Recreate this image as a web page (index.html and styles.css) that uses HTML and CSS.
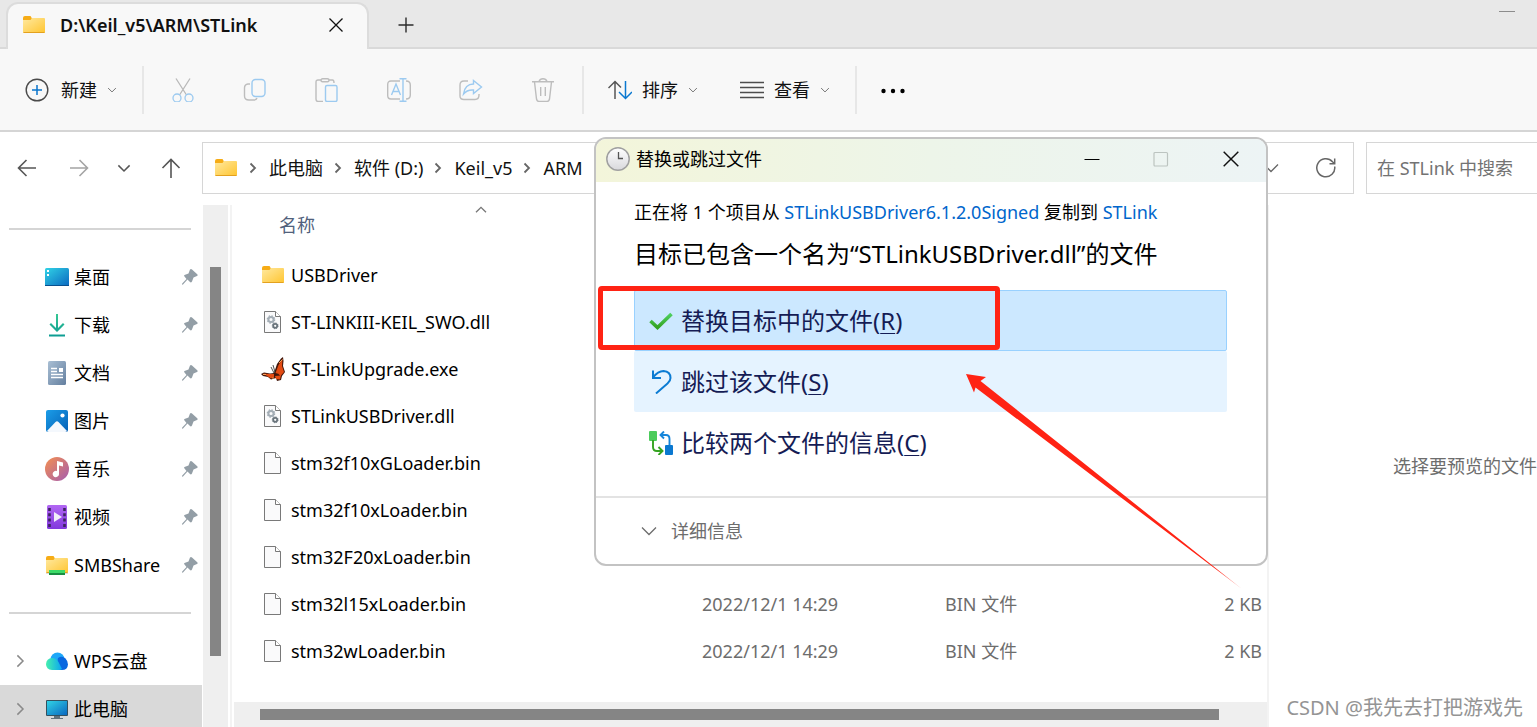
FILE: index.html
```html
<!DOCTYPE html>
<html lang="zh-CN">
<head>
<meta charset="utf-8">
<title>D:\Keil_v5\ARM\STLink</title>
<link rel="stylesheet" href="styles.css">
</head>
<body>
<svg class="sprite" aria-hidden="true">
  <defs>
    <linearGradient id="g-folder" x1="0" y1="0" x2="1" y2="1"><stop offset="0" stop-color="#ffe9a0"/><stop offset="1" stop-color="#ffc530"/></linearGradient>
    <linearGradient id="g-desk" x1="0" y1="0" x2="1" y2="1"><stop offset="0" stop-color="#31d3e6"/><stop offset="1" stop-color="#0a68c0"/></linearGradient>
    <linearGradient id="g-down" x1="0" y1="0" x2="0" y2="1"><stop offset="0" stop-color="#35c793"/><stop offset="1" stop-color="#0c9c93"/></linearGradient>
    <linearGradient id="g-doc" x1="0" y1="0" x2="1" y2="1"><stop offset="0" stop-color="#a9bfd4"/><stop offset="1" stop-color="#647f9f"/></linearGradient>
    <linearGradient id="g-pic" x1="0" y1="0" x2="1" y2="1"><stop offset="0" stop-color="#1b9de8"/><stop offset="1" stop-color="#0560b6"/></linearGradient>
    <linearGradient id="g-music" x1="0" y1="0" x2="1" y2="1"><stop offset="0" stop-color="#f5904f"/><stop offset="1" stop-color="#a45cb0"/></linearGradient>
    <linearGradient id="g-video" x1="0" y1="0" x2="0" y2="1"><stop offset="0" stop-color="#b267f3"/><stop offset="1" stop-color="#8138dd"/></linearGradient>
    <linearGradient id="g-cloud" x1="0" y1="0" x2="1" y2="0"><stop offset="0" stop-color="#45f0ae"/><stop offset="1" stop-color="#0aa5f2"/></linearGradient>
    <linearGradient id="g-clock" x1="0" y1="0" x2="0" y2="1"><stop offset="0" stop-color="#ffffff"/><stop offset="1" stop-color="#d8d8dc"/></linearGradient>
    <linearGradient id="g-check" x1="0" y1="0" x2="0" y2="1"><stop offset="0" stop-color="#4fd060"/><stop offset="1" stop-color="#35a321"/></linearGradient>
    <linearGradient id="g-arrow" gradientUnits="userSpaceOnUse" x1="0" y1="0" x2="276" y2="215"><stop offset="0.9" stop-color="#ff2314"/><stop offset="1" stop-color="#ff2314" stop-opacity="0.5"/></linearGradient>
  </defs>
  <symbol id="folder" viewBox="0 0 24 24"><path d="M1 5V5Q1 3 3 3H8.5L10 5.500V8H1Z" fill="#f6ac16"/><path d="M1 7H8.500L10 5H22Q23 5 23 6V19Q23 20 22 20H2Q1 20 1 19Z" fill="url(#g-folder)"/><path d="M1.500 19.500H22.500" stroke="#e3a11f"/></symbol>
  <symbol id="netfolder" viewBox="0 0 24 24"><use href="#folder"/><path d="M1 20H23V21H1Z" fill="#dcdcdc"/><rect x="4" y="17" width="16" height="5" fill="#3cdb68"/><rect x="4" y="20" width="16" height="2" fill="#188f42"/></symbol>
  <symbol id="desk" viewBox="0 0 24 24"><rect y="3" width="24" height="18" rx="1.500" fill="url(#g-desk)"/><path d="M2 5H4V7H2ZM2 9H4V11H2Z" fill="#fff"/><path d="M0 20.500H24" stroke="#09508e"/></symbol>
  <symbol id="down" viewBox="0 0 24 24"><path d="M11 1H13V15L18 10L19.500 11.500L12 19L4.500 11.500L6 10L11 15ZM4 21.500H20V23.500H4Z" fill="url(#g-down)"/></symbol>
  <symbol id="doc" viewBox="0 0 24 24"><rect x="3" width="18" height="24" rx="1.500" fill="url(#g-doc)"/><path d="M6 7.500H12M6 10.500H12M6 13.500H18M6 16.500H18" stroke="#fff" stroke-width="1.300"/><rect x="14" y="7" width="4" height="4" fill="#fff"/></symbol>
  <symbol id="pic" viewBox="0 0 24 24"><rect x="1" y="1" width="22" height="22" rx="2" fill="url(#g-pic)"/><path d="M2 22L10.500 13Q12 11.500 13.500 13L22 22Q21.500 23 20 23H4Q2.500 23 2 22Z" fill="#f4f8fd"/><circle cx="17.500" cy="6.500" r="2.100" fill="#fff"/></symbol>
  <symbol id="music" viewBox="0 0 24 24"><circle cx="12" cy="12" r="12" fill="url(#g-music)"/><path d="M12 4L18 5.500V9.500L14 8.500V16.500A3.200 3.200 0 1 1 12 14Z" fill="#fff"/></symbol>
  <symbol id="video" viewBox="0 0 24 24"><rect x="2" width="20" height="24" rx="1.500" fill="url(#g-video)"/><path d="M4.500 3V22M19.500 3V22" stroke="#3c2460" stroke-width="2.600" stroke-dasharray="3 2.300"/><path d="M9 7L17 12L9 17Z" fill="#f1eef8"/></symbol>
  <symbol id="cloud" viewBox="0 0 24 24"><circle cx="12.500" cy="10.500" r="7" fill="#1ea7f8"/><path d="M13 9Q17 6.500 20.500 9.500Q23 12 23 15.500Q22.500 21 17 21H11Z" fill="#0867e0"/><path d="M7 9Q11 9 13.500 13L17 20Q16 21 14 21H7Q1 20.500 1 15Q1.500 9.500 7 9Z" fill="url(#g-cloud)"/></symbol>
  <symbol id="pc" viewBox="0 0 24 24"><path d="M9 19H15V21H18V22H6V21H9Z" fill="#60717c"/><rect x="1" y="3" width="22" height="16" rx="1" fill="#34515f"/><rect x="2" y="4" width="20" height="14" fill="url(#g-desk)"/></symbol>
  <symbol id="pin" viewBox="0 0 18 18"><path d="M9 1.500Q10 0.500 11 1.500L16.500 6.500Q17 7.500 16 8L12.500 9.500L11 13.500Q10 15 9 14L6.500 11.500L2 16.500L1 16.800L1.200 15.500L5.500 11L3.500 8.500Q2.500 7.500 3.500 7L7.500 5.500Z" fill="#939ea6"/></symbol>
  <symbol id="page" viewBox="0 0 24 24"><path d="M4 1.500H14.500L19.500 6.500V22.500H3.500V1.500Z" fill="#fafafb" stroke="#797979"/><path d="M14.500 1.500V6.500H19.500" fill="#fff" stroke="#797979"/></symbol>
  <symbol id="dll" viewBox="0 0 24 24"><use href="#page"/><circle cx="10" cy="9.500" r="2.600" fill="none" stroke="#a3adb5" stroke-width="2"/><circle cx="10" cy="9.500" r="3.700" fill="none" stroke="#a3adb5" stroke-width="1.200" stroke-dasharray="1.500 1.400"/><circle cx="14.200" cy="15.800" r="2" fill="none" stroke="#69747c" stroke-width="1.700"/><circle cx="14.200" cy="15.800" r="2.900" fill="none" stroke="#69747c" stroke-dasharray="1.200 1.080"/></symbol>
  <symbol id="moth" viewBox="0 0 24 24"><path d="M0 17L3 15.500L9 16.500L13 16L16 7L20 1.500L22 0L22.500 4L22 9L24 15L21 19L20 23L16 24L15 21L10 22.500L7 20L2 19Z" fill="#43170b"/><path d="M2 16.500L7 17L13 17L13 20L10 21.500L6 19ZM14.500 16L17.500 8L21.500 2L21 9L18 17ZM17.500 17L21 9L23 15L19.500 19ZM14 19L20 18.500L19 22.500L15 22Z" fill="#e34b13"/><path d="M2 17.500H5M18 6L21.500 2.500M11 21H13" stroke="#f2a15c"/><path d="M13 16L10 10M14 15L12 8" stroke="#222" stroke-width="0.800"/></symbol>
  <symbol id="chev" viewBox="0 0 24 24"><path d="M4.500 8.500L12 16L19.500 8.500" fill="none" stroke="currentColor" stroke-width="2"/></symbol>
  <symbol id="chev-bold" viewBox="0 0 16 16"><path d="M3.500 5.500L8 10L12.500 5.500" fill="none" stroke="currentColor" stroke-width="1.800"/></symbol>
  <symbol id="chev-thin" viewBox="0 0 18 18"><path d="M2 5.500L9 12.500L16 5.500" fill="none" stroke="currentColor" stroke-width="1.300"/></symbol>
  <symbol id="close" viewBox="0 0 16 16"><path d="M1.500 1.500L14.500 14.500M14.500 1.500L1.500 14.500" fill="none" stroke="currentColor" stroke-width="1.300"/></symbol>
</svg>

<div class="explorer">
  <header class="tabs">
    <div class="tab">
      <svg class="ico"><use href="#folder"/></svg>
      <span class="tab-title">D:\Keil_v5\ARM\STLink</span>
      <button class="plain" aria-label="关闭标签页"><svg class="ico-16"><use href="#close"/></svg></button>
    </div>
    <button class="plain add" aria-label="新建标签页"><svg class="ico-16" viewBox="0 0 16 16"><path d="M8 0.500V15.500M0.500 8H15.500" stroke="#2b2b2b" stroke-width="1.400"/></svg></button>
    <button class="plain minimise" aria-label="最小化"><svg class="ico-16" viewBox="0 0 16 16"><path d="M0 8.500H16" stroke="#8c8c8c"/></svg></button>
  </header>

  <div class="toolbar">
    <button class="tool new">
      <svg class="ico" viewBox="0 0 24 24" fill="none"><circle cx="12" cy="12" r="10.800" stroke="#4a4a4a" stroke-width="1.400"/><path d="M12 7V17M7 12H17" stroke="#0a74cc" stroke-width="1.500"/></svg>
      新建<svg class="ico-10 dim"><use href="#chev-thin"/></svg>
    </button>
    <div class="tool-group">
      <button class="plain" aria-label="剪切"><svg class="ico" viewBox="0 0 24 24" fill="none" stroke-width="1.300"><path d="M5 0.500L15.500 17M19 0.500L8.500 17" stroke="#b9b9b9"/><circle cx="6" cy="20" r="4" stroke="#9ccaf0"/><circle cx="18" cy="20" r="4" stroke="#9ccaf0"/></svg></button>
      <button class="plain" aria-label="复制"><svg class="ico" viewBox="0 0 24 24" fill="none" stroke-width="1.400"><path d="M7 6H5Q1.500 6.500 1.500 10V18Q1.500 22 6 22H10Q13.500 22 14 20" stroke="#bdbdbd"/><rect x="9" y="1.500" width="13" height="17" rx="3.500" stroke="#9ccaf0"/></svg></button>
      <button class="plain" aria-label="粘贴"><svg class="ico" viewBox="0 0 24 24" fill="none" stroke-width="1.400"><path d="M6 2H3Q1 2 1 4V21Q1 23.500 3 23.500H8M14 2H17.500Q19 2 19 5" stroke="#bdbdbd"/><rect x="6" y="0.700" width="8" height="3" rx="1.500" stroke="#bdbdbd"/><rect x="10.500" y="7.500" width="11.500" height="16" rx="1.500" stroke="#9ccaf0"/></svg></button>
      <button class="plain" aria-label="重命名"><svg class="ico" viewBox="0 0 24 24" fill="none" stroke-width="1.400"><path d="M13 3H4Q0.700 3 0.700 6.500V17.500Q0.700 21 4 21H13M19 3Q23.300 3 23.300 7V17Q23.300 21 19 21" stroke="#bdbdbd"/><path d="M4.500 17L9 6L13.500 17M6 13.500H12M16 1V23M12.500 0.700H19.500M12.500 23.300H19.500" stroke="#9ccaf0"/></svg></button>
      <button class="plain" aria-label="共享"><svg class="ico" viewBox="0 0 24 24" fill="none" stroke-width="1.400"><path d="M9 3H5Q1 3 1 7V18Q1 21.500 5 21.500H16Q20 21.500 20 17V16" stroke="#bdbdbd"/><path d="M14.500 2.500L22.500 9L14.500 15.500V12Q8 11.500 4.500 16Q6 6 14.500 6Z" stroke="#9ccaf0"/></svg></button>
      <button class="plain" aria-label="删除"><svg class="ico" viewBox="0 0 24 24" fill="none" stroke="#bdbdbd" stroke-width="1.400"><path d="M1 3.700H23M8 3.500Q9 0.700 12 0.700T16 3.500M3.500 4L5.500 21Q6 23.500 8 23.500H16Q18 23.500 18.500 21L20.500 4M9.700 9V18M14.300 9V18"/></svg></button>
    </div>
    <div class="tool-group wide">
      <button class="tool"><svg class="ico" viewBox="0 0 24 24" fill="none" stroke-width="1.500"><path d="M7 21V3M0.500 10L7 3.500L13 9.500" stroke="#555"/><path d="M17.500 3V20M11 14L17.500 20.500L24 14" stroke="#0a78d0"/></svg>排序<svg class="ico-10 dim"><use href="#chev-thin"/></svg></button>
      <button class="tool"><svg class="ico" viewBox="0 0 24 24"><path d="M0 4.500H24M0 9.500H24M0 14.500H24M0 19.500H24" stroke="#4d4d4d" stroke-width="1.300"/></svg>查看<svg class="ico-10 dim"><use href="#chev-thin"/></svg></button>
    </div>
    <button class="plain more" aria-label="更多"><svg class="ico" viewBox="0 0 24 24"><circle cx="2.500" cy="13" r="2.200"/><circle cx="12" cy="13" r="2.200"/><circle cx="21.500" cy="13" r="2.200"/></svg></button>
  </div>

  <div class="navbar">
    <div class="nav-buttons">
      <button class="plain" aria-label="后退"><svg class="ico-20" viewBox="0 0 20 20" fill="none" stroke="#555" stroke-width="1.600"><path d="M19 10H2M9.500 2L1.500 10L9.500 18"/></svg></button>
      <button class="plain" aria-label="前进"><svg class="ico-20" viewBox="0 0 20 20" fill="none" stroke="#a4a4a4" stroke-width="1.600"><path d="M1 10H18M10.500 2L18.500 10L10.500 18"/></svg></button>
      <button class="plain" aria-label="最近位置"><svg class="ico-18"><use href="#chev"/></svg></button>
      <button class="plain" aria-label="上移"><svg class="ico-20" viewBox="0 0 20 20" fill="none" stroke="#555" stroke-width="1.600"><path d="M10 20V2M1.500 10L10 1.500L18.500 10"/></svg></button>
    </div>
    <nav class="address" aria-label="地址">
      <svg class="ico"><use href="#folder"/></svg>
      <svg class="ico-16 right"><use href="#chev-bold"/></svg><span>此电脑</span>
      <svg class="ico-16 right"><use href="#chev-bold"/></svg><span>软件 (D:)</span>
      <svg class="ico-16 right"><use href="#chev-bold"/></svg><span>Keil_v5</span>
      <svg class="ico-16 right"><use href="#chev-bold"/></svg><span>ARM</span>
      <span class="grow"></span>
      <button class="plain" aria-label="展开"><svg class="ico-18"><use href="#chev-thin"/></svg></button>
      <button class="plain refresh" aria-label="刷新"><svg class="ico-20" viewBox="0 0 20 20" fill="none" stroke="#666" stroke-width="1.500"><path d="M18.700 8.500A9 9 0 1 1 16.500 3.800L18.500 5.500M18.700 0.500V5.700H13.500"/></svg></button>
    </nav>
    <input class="search" type="text" aria-label="搜索" placeholder="在 STLink 中搜索">
  </div>

  <main class="panes">
    <aside class="side">
      <hr class="rule">
      <ul class="places">
        <li><svg class="ico"><use href="#desk"/></svg><span>桌面</span><svg class="ico-18"><use href="#pin"/></svg></li>
        <li><svg class="ico"><use href="#down"/></svg><span>下载</span><svg class="ico-18"><use href="#pin"/></svg></li>
        <li><svg class="ico"><use href="#doc"/></svg><span>文档</span><svg class="ico-18"><use href="#pin"/></svg></li>
        <li><svg class="ico"><use href="#pic"/></svg><span>图片</span><svg class="ico-18"><use href="#pin"/></svg></li>
        <li><svg class="ico"><use href="#music"/></svg><span>音乐</span><svg class="ico-18"><use href="#pin"/></svg></li>
        <li><svg class="ico"><use href="#video"/></svg><span>视频</span><svg class="ico-18"><use href="#pin"/></svg></li>
        <li><svg class="ico"><use href="#netfolder"/></svg><span>SMBShare</span><svg class="ico-18"><use href="#pin"/></svg></li>
      </ul>
      <hr class="rule">
      <ul class="places tree">
        <li><svg class="ico-18 right"><use href="#chev"/></svg><svg class="ico"><use href="#cloud"/></svg><span>WPS云盘</span></li>
        <li class="current"><svg class="ico-18 right"><use href="#chev"/></svg><svg class="ico"><use href="#pc"/></svg><span>此电脑</span></li>
      </ul>
    </aside>
    <div class="vbar"><div class="vthumb"></div></div>
    <section class="files">
      <table>
        <colgroup><col class="c-name"><col class="c-date"><col class="c-type"><col></colgroup>
        <thead><tr><th colspan="4"><div class="head"><span>名称</span><svg class="ico-16 up"><use href="#chev"/></svg></div></th></tr></thead>
        <tbody>
          <tr><td><div class="file"><svg class="ico"><use href="#folder"/></svg>USBDriver</div></td><td></td><td></td><td></td></tr>
          <tr><td><div class="file"><svg class="ico"><use href="#dll"/></svg>ST-LINKIII-KEIL_SWO.dll</div></td><td></td><td></td><td></td></tr>
          <tr><td><div class="file"><svg class="ico"><use href="#moth"/></svg>ST-LinkUpgrade.exe</div></td><td></td><td></td><td></td></tr>
          <tr><td><div class="file"><svg class="ico"><use href="#dll"/></svg>STLinkUSBDriver.dll</div></td><td></td><td></td><td></td></tr>
          <tr><td><div class="file"><svg class="ico"><use href="#page"/></svg>stm32f10xGLoader.bin</div></td><td></td><td></td><td></td></tr>
          <tr><td><div class="file"><svg class="ico"><use href="#page"/></svg>stm32f10xLoader.bin</div></td><td></td><td></td><td></td></tr>
          <tr><td><div class="file"><svg class="ico"><use href="#page"/></svg>stm32F20xLoader.bin</div></td><td>2022/12/1 14:29</td><td>BIN 文件</td><td></td></tr>
          <tr><td><div class="file"><svg class="ico"><use href="#page"/></svg>stm32l15xLoader.bin</div></td><td>2022/12/1 14:29</td><td>BIN 文件</td><td>2 KB</td></tr>
          <tr><td><div class="file"><svg class="ico"><use href="#page"/></svg>stm32wLoader.bin</div></td><td>2022/12/1 14:29</td><td>BIN 文件</td><td>2 KB</td></tr>
        </tbody>
      </table>
      <div class="hbar"><div class="hthumb"></div></div>
    </section>
    <section class="preview"><p>选择要预览的文件</p></section>
  </main>
</div>

<div class="dialog" role="dialog" aria-labelledby="dialog-title">
  <header class="dialog-bar">
    <svg class="ico" viewBox="0 0 24 24"><circle cx="12" cy="12" r="11.200" fill="url(#g-clock)" stroke="#a0a0a0" stroke-width="1.500"/><path d="M12.500 5V11.500H17" fill="none" stroke="#555" stroke-width="1.300"/></svg>
    <h1 id="dialog-title">替换或跳过文件</h1>
    <button class="plain" aria-label="最小化"><svg class="ico-16" viewBox="0 0 16 16"><path d="M0.500 8.500H15.500" stroke="#000"/></svg></button>
    <button class="plain" aria-label="最大化" disabled><svg class="ico-16" viewBox="0 0 16 16"><rect x="1" y="1.500" width="13.500" height="13.500" rx="1" fill="none" stroke="#bcc4c0" stroke-width="1.200"/></svg></button>
    <button class="plain" aria-label="关闭"><svg class="ico-18"><use href="#close"/></svg></button>
  </header>
  <div class="dialog-body">
    <p class="lead">正在将 1 个项目从 <a href="#">STLinkUSBDriver6.1.2.0Signed</a> 复制到 <a href="#">STLink</a></p>
    <h2>目标已包含一个名为“STLinkUSBDriver.dll”的文件</h2>
    <button class="choice chosen"><svg class="ico" viewBox="0 0 24 24"><path d="M1.500 12L8.500 18.500L22.500 5" fill="none" stroke="url(#g-check)" stroke-width="3.600"/></svg><span>替换目标中的文件(<u>R</u>)</span></button>
    <button class="choice hover"><svg class="ico" viewBox="0 0 24 24" fill="none" stroke="#0b7bd3" stroke-width="2"><path d="M4 0.500V8H12M4 7.500Q9 1 14.500 1Q21.500 1.500 21.500 8Q21.500 11 18.500 13.500L7 23.500"/></svg><span>跳过该文件(<u>S</u>)</span></button>
    <button class="choice"><svg class="ico" viewBox="0 0 24 24"><rect width="8" height="10" rx="1" fill="#4bcb5b"/><rect x="16" y="14" width="8" height="10" rx="1" fill="#0a78d0"/><path d="M4 9V16Q4 20 8 20H13M9.500 16L13.500 20L9.500 24" fill="none" stroke="#35a321" stroke-width="1.900"/><path d="M20.500 14V8Q20.500 4 17 4H12M15 0.500L11.500 4L15 7.500" fill="none" stroke="#1685da" stroke-width="1.900"/></svg><span>比较两个文件的信息(<u>C</u>)</span></button>
  </div>
  <footer class="dialog-foot"><button class="details"><svg class="ico-18"><use href="#chev-thin"/></svg>详细信息</button></footer>
</div>

<div class="mark-box"></div>
<svg class="mark-arrow" viewBox="0 0 276 215"><path d="M0 0L20 3L14.500 7L276 215L9.500 13.500L8 18.500Z" fill="url(#g-arrow)"/></svg>
<div class="watermark">CSDN @我先去打把游戏先</div>
</body>
</html>
```

FILE: styles.css
```css
* { box-sizing: border-box; }

body {
  position: relative;
  height: 100vh;
  margin: 0;
  overflow: hidden;
  background: #fff;
  color: #111;
  font: 18px/24px "Noto Sans", "Noto Sans CJK SC", sans-serif;
}

button, input { font: inherit; color: inherit; }
button { display: flex; align-items: center; padding: 0; border: 0; background: none; }
h1, h2, p, ul { margin: 0; padding: 0; font-weight: 400; }
ul { list-style: none; }
svg { display: block; flex: none; }

.sprite { position: absolute; width: 0; height: 0; }
.ico { width: 24px; height: 24px; }
.ico-20 { width: 20px; height: 20px; }
.ico-18 { width: 18px; height: 18px; }
.ico-16 { width: 16px; height: 16px; }
.ico-10 { width: 10px; height: 10px; }
.dim { color: #444; }
.right { transform: rotate(-90deg); }
.up { transform: rotate(180deg); }
.grow { flex: 1; }

.explorer { display: flex; flex-direction: column; height: 100%; }

/* Tab strip */
.tabs {
  display: flex;
  flex: none;
  align-items: flex-start;
  height: 49px;
  padding: 2px 22px 0 6px;
  background: #e8e8e8;
  box-shadow: inset 0 -2px #d9d9d9;
}
.tab {
  display: flex;
  align-items: center;
  width: 363px;
  height: 47px;
  padding: 0 23px 3px 14px;
  border: 2px solid #dcdcdc;
  border-bottom: 0;
  border-radius: 12px 12px 0 0;
  background: #f8f8f8;
}
.tab-title { flex: 1; margin-left: 14px; font-weight: 600; }
.add { margin: 15px 0 0 29px; }
.minimise { margin: 1px 0 0 auto; }

/* Command bar */
.toolbar {
  display: flex;
  flex: none;
  align-items: center;
  height: 83px;
  padding-left: 25px;
  border-bottom: 2px solid #d5d5d5;
  background: #f8f8f8;
}
.tool { gap: 10px; }
.new { width: 117px; }
.new .ico { margin-right: 2px; }
.tool-group {
  display: flex;
  align-items: center;
  gap: 48px;
  height: 48px;
  padding: 0 27px;
  border-left: 2px solid #e7e7e7;
}
.tool-group.wide { gap: 42px; padding: 0 25px 0 24px; border-right: 2px solid #e7e7e7; }
.more { margin-left: 24px; }

/* Address row */
.navbar { display: flex; flex: none; align-items: center; height: 73px; padding-bottom: 2px; overflow: hidden; color: #555; }
.nav-buttons { display: flex; flex: none; align-items: center; gap: 32px; width: 202px; padding-left: 17px; }
.nav-buttons .plain:nth-child(3) { margin: 0 -4px 0 -6px; }
.address {
  display: flex;
  flex: 1 1 0;
  align-items: center;
  gap: 8px;
  min-width: 0;
  height: 52px;
  padding: 0 17px 0 11px;
  border: 1px solid #d6d6d6;
  color: #666;
  white-space: nowrap;
}
.address span { color: #111; }
.address .right { margin-left: -1px; }
.refresh { margin-left: 28px; }
.search {
  width: 171px;
  height: 52px;
  margin-left: 12px;
  padding: 0 0 0 10px;
  border: 1px solid #d6d6d6;
  border-right: 0;
  border-radius: 0;
  background: #fff;
}
.search::placeholder { color: #737373; opacity: 1; }

/* Panes */
.panes { display: flex; flex: 1; min-height: 0; overflow: hidden; }
.side { flex: none; width: 203px; padding-top: 23px; }
.rule { height: 2px; margin: 0 12px 0 9px; border: 0; background: #d5d5d5; }
.places { padding: 23px 0 23px; }
.places li { display: flex; align-items: center; gap: 5px; height: 48px; margin-right: 1px; padding: 0 3px 0 45px; }
.places span { flex: 1; color: #000; }
.places.tree li { padding-left: 11px; }
.tree .right { margin-right: 11px; color: #8a8a8a; }
.current { background: #d9d9d9; }
.vbar { flex: none; width: 25px; padding: 62px 7px 71px; background: #efefef; }
.vthumb { height: 100%; background: #858585; }

.files { display: flex; flex: 1; flex-direction: column; min-width: 0; margin-left: 2px; border-left: 2px solid #f3f3f3; }
table { width: 100%; border-collapse: collapse; table-layout: fixed; }
th { height: 46px; padding: 0; font-weight: 400; text-align: left; vertical-align: top; }
.head { display: flex; align-items: flex-start; gap: 158px; padding-left: 47px; color: #51617c; }
.head span { padding-top: 8px; }
.head .up { margin-top: -3px; color: #777; }
td { height: 47px; padding: 0; color: #6d6d6d; white-space: nowrap; }
td:last-child { padding-right: 5px; text-align: right; }
.c-name { width: 470px; }
.c-date { width: 243px; }
.c-type { width: 160px; }
.file { display: flex; align-items: center; gap: 6px; padding-left: 29px; color: #000; }
.hbar { height: 25px; margin: auto 0 0 2px; padding: 7px 48px 7px 26px; background: #efefef; }
.hthumb { height: 11px; background: #858585; }
.preview { flex: none; width: 270px; padding: 249px 0 0 124px; border-left: 2px solid #f3f3f3; color: #6d6d6d; white-space: nowrap; }

/* Replace / skip dialog */
.dialog {
  position: absolute;
  top: 137px;
  left: 594px;
  width: 674px;
  border: 2px solid #c3c3c3;
  border-radius: 12px;
  background: #fff;
  background-clip: padding-box;
  overflow: hidden;
}
.dialog-bar {
  display: flex;
  align-items: center;
  height: 43px;
  padding: 0 26px 3px 10px;
  background: linear-gradient(90deg, #f3f5da, #edf5e9 50%, #edf4f5);
}
.dialog-bar h1 { flex: 1; margin-left: 6px; font-size: 18px; color: #000; }
.dialog-bar .plain { margin-left: 53px; }
.dialog-body { padding: 18px 39px 23px 38px; color: #000; }
.lead { white-space: nowrap; }
.lead a { color: #0066cc; text-decoration: none; }
.dialog-body h2 { margin: 14px 0 20px; font-size: 24px; line-height: 32px; white-space: nowrap; }
.choice {
  gap: 8px;
  width: 100%;
  height: 61px;
  padding-left: 14px;
  border: 1px solid transparent;
  border-radius: 2px;
  color: #151c55;
  font-size: 24px;
  line-height: 32px;
}
.choice u { text-decoration-thickness: 1px; text-underline-offset: 3px; }
.chosen { border-color: #99d1ff; background: #cce8ff; }
.hover { background: #e5f3ff; }
.dialog-foot { padding: 21px 0 21px 44px; border-top: 2px solid #e3e3e3; }
.details { gap: 13px; color: #6d6d6d; }

/* Annotations over the windows */
.mark-box {
  position: absolute;
  top: 286px;
  left: 598px;
  width: 402px;
  height: 64px;
  border: 5px solid #ff2314;
  border-radius: 4px;
}
.mark-arrow { position: absolute; top: 374px; left: 966px; width: 276px; height: 215px; }
.watermark { position: absolute; right: 14px; bottom: 7px; color: #949494; font-size: 20px; text-shadow: -1px -1px #fff; }
```
